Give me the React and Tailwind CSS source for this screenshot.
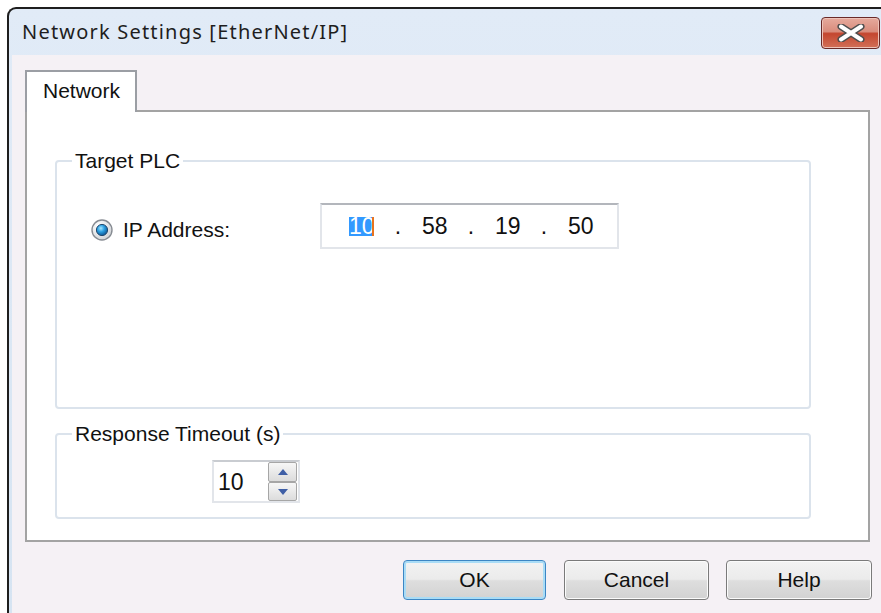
import React from "react";

const sans = "font-['Liberation_Sans',Arial,sans-serif]";

function CloseGlyph() {
  return (
    <svg width="28" height="18" viewBox="0 0 28 18">
      <path d="M4 2.5 L24 15.5 M24 2.5 L4 15.5" stroke="#4f4f4f" strokeWidth="7" strokeLinecap="round" />
      <path d="M4 2.5 L24 15.5 M24 2.5 L4 15.5" stroke="#ffffff" strokeWidth="4" strokeLinecap="round" />
    </svg>
  );
}

function RadioOn() {
  return (
    <svg width="22" height="22" viewBox="0 0 22 22">
      <defs>
        <radialGradient id="radioRing" cx="35%" cy="30%" r="80%">
          <stop offset="0%" stopColor="#ffffff" />
          <stop offset="100%" stopColor="#cdd0d4" />
        </radialGradient>
        <radialGradient id="radioDot" cx="40%" cy="35%" r="70%">
          <stop offset="0%" stopColor="#a6e6ff" />
          <stop offset="45%" stopColor="#2a9ee0" />
          <stop offset="100%" stopColor="#0b4f8c" />
        </radialGradient>
      </defs>
      <circle cx="11" cy="11" r="10" fill="url(#radioRing)" stroke="#878c93" strokeWidth="1.4" />
      <circle cx="11" cy="11" r="5.6" fill="url(#radioDot)" stroke="#20496f" strokeWidth="1" />
    </svg>
  );
}

function SpinArrow({ down }) {
  return (
    <svg width="10" height="6" viewBox="0 0 10 6">
      <path d={down ? "M0 0 L10 0 L5 6 Z" : "M0 6 L10 6 L5 0 Z"} fill="#3f5fa6" />
    </svg>
  );
}

function Group({ title, className, children }) {
  return (
    <fieldset className={`ml-[28px] w-[756px] rounded-[4px] border-2 border-[#dbe3ec] ${className}`}>
      <legend className="ml-[15px] px-[3px] text-[21px] leading-[24px] text-[#111]">{title}</legend>
      {children}
    </fieldset>
  );
}

function Button({ label, focused, className }) {
  return (
    <button
      className={`h-[40px] rounded-[4px] border text-[21px] text-[#111] bg-[linear-gradient(to_bottom,#f3f3f3_0%,#ebebeb_48%,#dedede_52%,#d2d2d2_100%)] ${
        focused
          ? "border-[#3c86c4] shadow-[inset_0_0_0_2px_#a9dcf6]"
          : "border-[#7a7a7a] shadow-[inset_0_0_0_1px_#fbfbfb]"
      } ${className}`}
    >
      {label}
    </button>
  );
}

export default function App() {
  const octets = ["58", "19", "50"];

  return (
    <div className={`w-[881px] h-[613px] overflow-hidden bg-white pt-[7px] pl-[7px] ${sans}`}>
      <div className="flex h-[606px] w-[874px] flex-col overflow-hidden rounded-tl-[9px] border-l-2 border-t-2 border-[#1e1e1e] bg-[linear-gradient(to_bottom,#e1ebf7,#d6e4f2)]">
        {/* title bar */}
        <div className="flex h-[46px] shrink-0 items-start justify-between">
          <div className="mt-[11px] pl-[13px] font-['Noto_Sans',sans-serif] text-[20px] leading-[24px] tracking-[1.2px] text-[#1e1e1e]">
            Network Settings [EtherNet/IP]
          </div>
          <div className="mr-[1px] mt-[8px] flex h-[32px] w-[59px] items-center justify-center rounded-[4px] border border-[#6a2a28] bg-[linear-gradient(to_bottom,#e6aa9d_0%,#d98c7c_45%,#c4462f_52%,#d27058_100%)] shadow-[inset_0_0_0_1px_#eec3b9]">
            <CloseGlyph />
          </div>
        </div>

        {/* dialog body */}
        <div className="ml-[3px] flex-1 bg-[#f5f1f5]">
          <div className="ml-[13px] mt-[15px] w-[845px]">
            {/* tab strip */}
            <div className="flex h-[42px]">
              <div className="w-[112px] border-x-2 border-t-2 border-[#9b9ea4] bg-white pl-[16px] pt-[7px] text-[21px] leading-[24px] text-[#111]">
                Network
              </div>
              <div className="flex-1 border-b-2 border-[#a3a3a3]" />
            </div>

            {/* tab page */}
            <div className="flex h-[430px] flex-col border-x-2 border-b-2 border-[#a3a3a3] bg-white pt-[37px]">
              <Group title="Target PLC" className="h-[260px]">
                <div className="mt-[30px] flex h-[46px] items-center pl-[34px]">
                  <div className="mt-[8px] flex w-[229px] items-center gap-[10px]">
                    <RadioOn />
                    <span className="text-[21px] leading-[24px] text-[#111]">IP Address:</span>
                  </div>
                  <div className="flex h-[46px] w-[299px] items-center border-2 border-[#e2e5ea] border-t-[#b3b6bc] pl-[27px] text-[23px] text-[#111]">
                    <span className="relative w-[25px] bg-[#3399ff] text-center leading-[19px] text-white">
                      10
                      <span className="absolute right-0 top-0 h-[19px] w-[2px] bg-[#e8731e]" />
                    </span>
                    {octets.map((o) => (
                      <React.Fragment key={o}>
                        <span className="w-[48px] text-center">.</span>
                        <span className="w-[25px] text-center leading-[19px]">{o}</span>
                      </React.Fragment>
                    ))}
                  </div>
                </div>
              </Group>

              <Group title="Response Timeout (s)" className="mt-[13px] h-[97px]">
                <div className="ml-[155px] mt-[14px] flex h-[43px] w-[88px] items-center justify-between border-2 border-[#e2e5ea] border-t-[#c9ccd1] pl-[4px] pr-[1px]">
                  <span className="text-[23px] leading-[24px] text-[#111]">10</span>
                  <div className="flex flex-col">
                    <div className="flex h-[20px] w-[29px] items-center justify-center rounded-[2px] border border-[#a6a6a6] bg-[linear-gradient(to_bottom,#f7f7f7,#dcdcdc)]">
                      <SpinArrow />
                    </div>
                    <div className="flex h-[19px] w-[29px] items-center justify-center rounded-[2px] border border-[#a6a6a6] bg-[linear-gradient(to_bottom,#f7f7f7,#dcdcdc)]">
                      <SpinArrow down />
                    </div>
                  </div>
                </div>
              </Group>
            </div>
          </div>

          {/* buttons */}
          <div className="mt-[18px] flex justify-end gap-[17px] pr-[9px]">
            <Button label="OK" focused className="mr-[1px] w-[143px]" />
            <Button label="Cancel" className="w-[145px]" />
            <Button label="Help" className="w-[146px]" />
          </div>
        </div>
      </div>
    </div>
  );
}
